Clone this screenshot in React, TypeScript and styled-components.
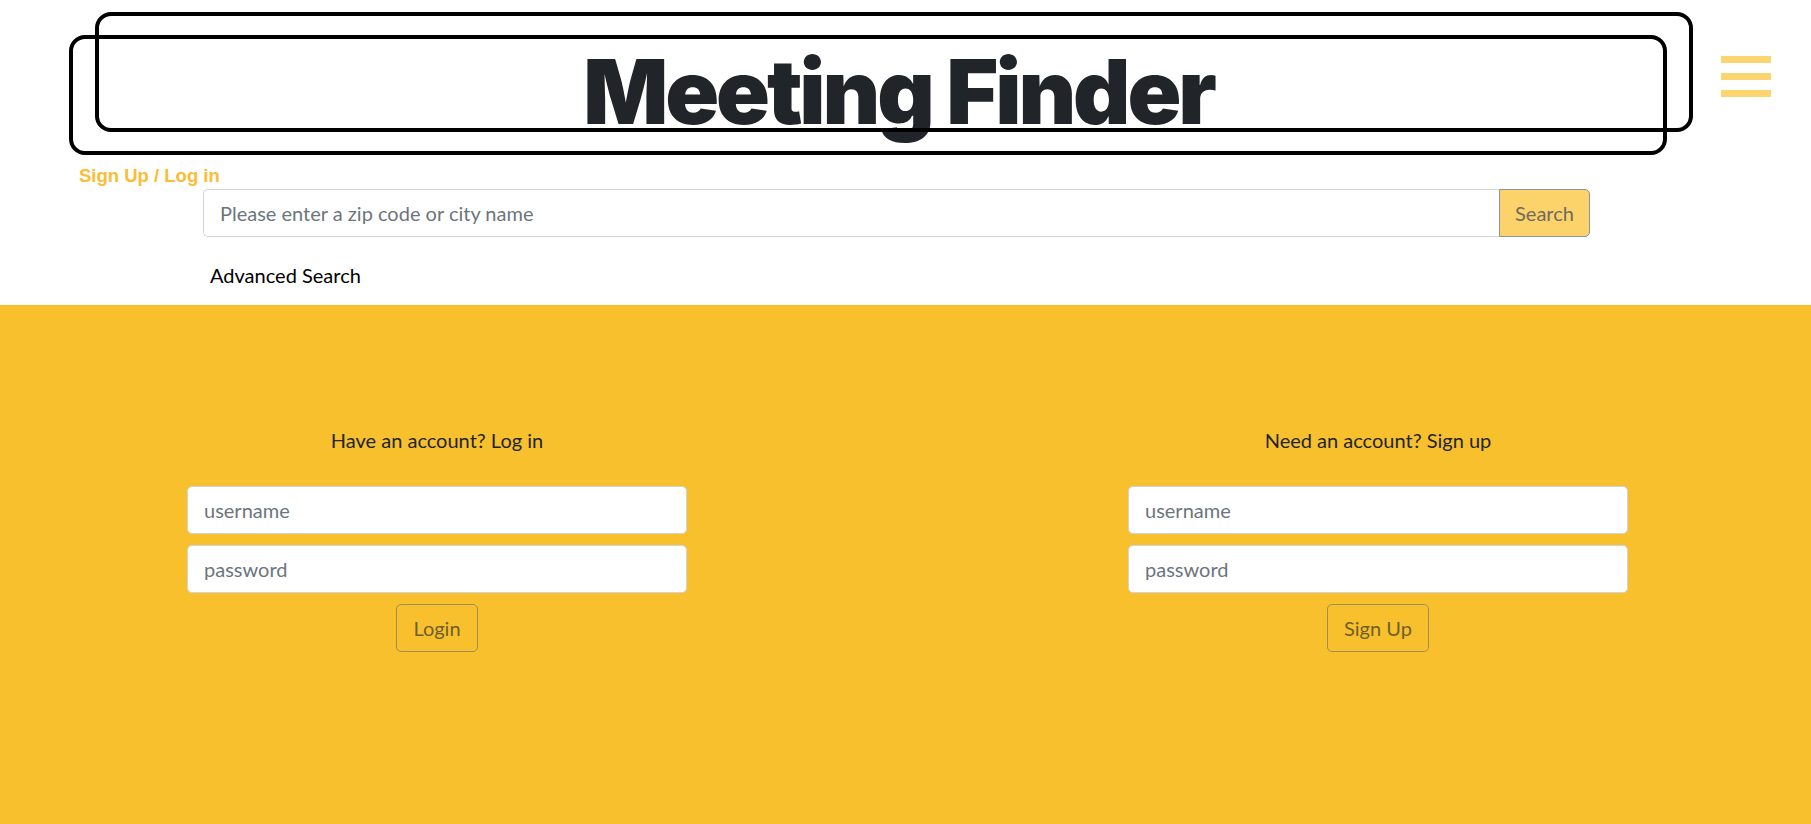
import styled, { createGlobalStyle } from 'styled-components';

const GlobalStyle = createGlobalStyle`
	html, body {
		margin: 0;
		padding: 0;
		background: #fff;
		font-family: Lato, 'Open Sans', sans-serif;
		color: #212529;
	}
	* {
		box-sizing: border-box;
	}
`;

const Page = styled.div`
	width: 1811px;
	min-height: 824px;
	display: flex;
	flex-direction: column;
`;

const Header = styled.header`
	position: relative;
	height: 163px;
	display: flex;
	justify-content: center;
	padding-top: 47px;
	padding-right: 14px;
`;

const Frame = styled.div<{ $left: number; $top: number }>`
	position: absolute;
	left: ${(p) => p.$left}px;
	top: ${(p) => p.$top}px;
	width: 1598px;
	height: 120px;
	border: 4px solid #000;
	border-radius: 16px;
	pointer-events: none;
`;

const Title = styled.h1`
	margin: 0;
	font-family: Inter, 'Noto Sans', sans-serif;
	font-weight: 900;
	font-size: 89px;
	line-height: 1;
	letter-spacing: -0.035em;
	color: #212529;
`;

const Burger = styled.button`
	position: absolute;
	right: 40px;
	top: 56px;
	width: 50px;
	padding: 0;
	border: none;
	background: none;
	display: flex;
	flex-direction: column;
	gap: 10px;
	cursor: pointer;
`;

const BurgerBar = styled.span`
	display: block;
	height: 7px;
	background: #fcd570;
`;

const AuthLink = styled.a`
	display: block;
	margin: 2px 0 0 79px;
	font-family: 'Liberation Sans', Arial, sans-serif;
	font-weight: 700;
	font-size: 18.5px;
	line-height: 22px;
	color: #fbbd36;
	text-decoration: none;
	cursor: pointer;
`;

const SearchRow = styled.form`
	display: flex;
	margin: 2px 0 0 203px;
	width: 1387px;
	height: 48px;
`;

const SearchInput = styled.input`
	flex: 1;
	height: 100%;
	padding: 0 16px;
	font-family: inherit;
	font-size: 20px;
	color: #495057;
	border: 1px solid #ced4da;
	border-right: none;
	border-radius: 5px 0 0 5px;
	outline: none;
	&::placeholder {
		color: #6c757d;
	}
`;

const SearchButton = styled.button`
	width: 91px;
	height: 100%;
	font-family: inherit;
	font-size: 20px;
	color: #6f6a5c;
	background: #fcd36b;
	border: 1px solid #8d9399;
	border-radius: 0 5px 5px 0;
	cursor: pointer;
`;

const AdvancedLink = styled.a`
	display: block;
	margin: 23px 0 0 210px;
	font-size: 20px;
	line-height: 30px;
	color: #000;
	cursor: pointer;
`;

const AuthSection = styled.section`
	flex: 1;
	margin-top: 15px;
	background: #f9c02e;
	display: flex;
	justify-content: space-between;
	padding: 120px 183px 0 187px;
`;

const AuthColumn = styled.div`
	width: 500px;
	display: flex;
	flex-direction: column;
	align-items: center;
`;

const ColumnHeading = styled.p`
	margin: 0 0 31px;
	font-size: 20px;
	line-height: 30px;
	color: #212529;
`;

const Field = styled.input`
	width: 100%;
	height: 48px;
	margin-bottom: 11px;
	padding: 0 16px;
	font-family: inherit;
	font-size: 20px;
	color: #495057;
	background: #fff;
	border: 1px solid #ced4da;
	border-radius: 5px;
	outline: none;
	&::placeholder {
		color: #6c757d;
	}
`;

const SubmitButton = styled.button`
	height: 48px;
	padding: 0 16px;
	font-family: inherit;
	font-size: 20px;
	color: #6e5f2a;
	background: transparent;
	border: 1px solid #a08e5a;
	border-radius: 5px;
	cursor: pointer;
`;

const App = () => {
	return (
		<Page>
			<GlobalStyle />
			<Header>
				<Frame $left={95} $top={12} />
				<Frame $left={69} $top={35} />
				<Title>Meeting Finder</Title>
				<Burger type='button' aria-label='menu'>
					<BurgerBar />
					<BurgerBar />
					<BurgerBar />
				</Burger>
			</Header>
			<AuthLink>Sign Up / Log in</AuthLink>
			<SearchRow onSubmit={(e) => e.preventDefault()}>
				<SearchInput placeholder='Please enter a zip code or city name' />
				<SearchButton type='submit'>Search</SearchButton>
			</SearchRow>
			<AdvancedLink>Advanced Search</AdvancedLink>
			<AuthSection>
				<AuthColumn>
					<ColumnHeading>Have an account? Log in</ColumnHeading>
					<Field placeholder='username' />
					<Field type='password' placeholder='password' />
					<SubmitButton type='button'>Login</SubmitButton>
				</AuthColumn>
				<AuthColumn>
					<ColumnHeading>Need an account? Sign up</ColumnHeading>
					<Field placeholder='username' />
					<Field type='password' placeholder='password' />
					<SubmitButton type='button'>Sign Up</SubmitButton>
				</AuthColumn>
			</AuthSection>
		</Page>
	);
};

export default App;
